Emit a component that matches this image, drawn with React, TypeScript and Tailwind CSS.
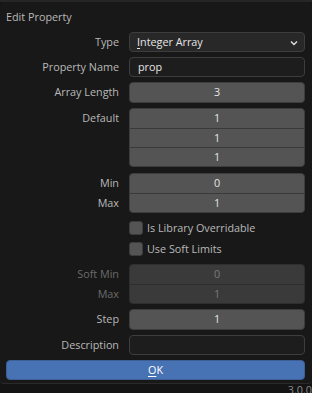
import React from 'react';

const font = { fontFamily: '"Open Sans", "DejaVu Sans", sans-serif' };

function Label({ text, dim }: { text: string; dim?: boolean }) {
  return (
    <div className={`w-[113px] shrink-0 text-right pr-0 ${dim ? 'text-[#6b6b6b]' : 'text-[#b8b8b8]'}`}>{text}</div>
  );
}

function Row({ label, dim, children }: { label?: string; dim?: boolean; children: React.ReactNode }) {
  return (
    <div className="flex items-start gap-[10px]">
      <div className="flex flex-col w-[113px] shrink-0">
        {label ? <div className="h-5 flex items-center justify-end"><Label text={label} dim={dim} /></div> : null}
      </div>
      <div className="flex-1">{children}</div>
    </div>
  );
}

function NumStack({ values, labels, dim }: { values: string[]; labels: string[]; dim?: boolean }) {
  return (
    <div className="flex items-start gap-[10px]">
      <div className="flex flex-col w-[113px] shrink-0">
        {labels.map((l, i) => (
          <div key={i} className="h-5 flex items-center justify-end">
            {l ? <Label text={l} dim={dim} /> : null}
          </div>
        ))}
      </div>
      <div
        className={`flex-1 flex flex-col rounded-[4px] border overflow-hidden ${
          dim ? 'border-[#2e2e2e] bg-[#3a3a3a]' : 'border-[#3d3d3d] bg-[#545454]'
        }`}
      >
        {values.map((v, i) => (
          <div
            key={i}
            className={`h-[19px] flex items-center justify-center ${i > 0 ? (dim ? 'border-t border-[#2e2e2e]' : 'border-t border-[#3a3a3a]') : ''} ${
              dim ? 'text-[#7a7a7a]' : 'text-[#e6e6e6]'
            }`}
          >
            {v}
          </div>
        ))}
      </div>
    </div>
  );
}

function Check({ text }: { text: string }) {
  return (
    <div className="flex items-center gap-[10px] h-5">
      <div className="w-[113px] shrink-0" />
      <div className="flex items-center gap-[4px]">
        <div className="w-[14px] h-[14px] rounded-[3px] bg-[#545454] border border-[#3d3d3d]" />
        <span className="text-[#b8b8b8]">{text}</span>
      </div>
    </div>
  );
}

export default function App() {
  return (
    <div className="w-[312px] h-[393px] bg-[#141414] overflow-hidden relative text-[10.8px] leading-none" style={font}>
      <div className="h-[2px] bg-[#262626]" />
      <div className="bg-[#181818] rounded-[4px] border-b border-[#2a2a2a] pl-[6px] pr-[7px] pt-[8px] pb-[4px] h-[382px]">
        <div className="text-[#b8b8b8] h-[14px] flex items-center">Edit Property</div>
        <div className="flex flex-col gap-[5px] mt-[8px]">
          <Row label="Type">
            <div className="h-5 rounded-[4px] bg-[#282828] border border-[#3d3d3d] flex items-center pl-[7px] pr-[6px] text-[#e6e6e6]">
              <span className="flex-1">
                <span className="underline underline-offset-2">I</span>nteger Array
              </span>
              <svg width="8" height="6" viewBox="0 0 8 6" className="mt-[1px]">
                <path d="M1 1.5 L4 4.5 L7 1.5" stroke="#e0e0e0" strokeWidth="1.4" fill="none" />
              </svg>
            </div>
          </Row>
          <Row label="Property Name">
            <div className="h-5 rounded-[4px] bg-[#1d1d1d] border border-[#3d3d3d] flex items-center pl-[8px] text-[#e6e6e6]">prop</div>
          </Row>
          <NumStack labels={['Array Length']} values={['3']} />
          <NumStack labels={['Default', '', '']} values={['1', '1', '1']} />
          <NumStack labels={['Min', 'Max']} values={['0', '1']} />
          <div className="flex flex-col gap-[1px]">
            <Check text="Is Library Overridable" />
            <Check text="Use Soft Limits" />
          </div>
          <NumStack labels={['Soft Min', 'Max']} values={['0', '1']} dim />
          <NumStack labels={['Step']} values={['1']} />
          <Row label="Description">
            <div className="h-5 rounded-[4px] bg-[#1d1d1d] border border-[#3d3d3d]" />
          </Row>
          <div className="h-5 rounded-[4px] bg-[#4772b3] border border-[#3d5f96] flex items-center justify-center text-white">
            <span>
              <span className="underline underline-offset-2">O</span>K
            </span>
          </div>
        </div>
      </div>
      <div className="absolute right-[0px] top-[385px] text-[#8a8a8a]">3.0.0</div>
    </div>
  );
}
